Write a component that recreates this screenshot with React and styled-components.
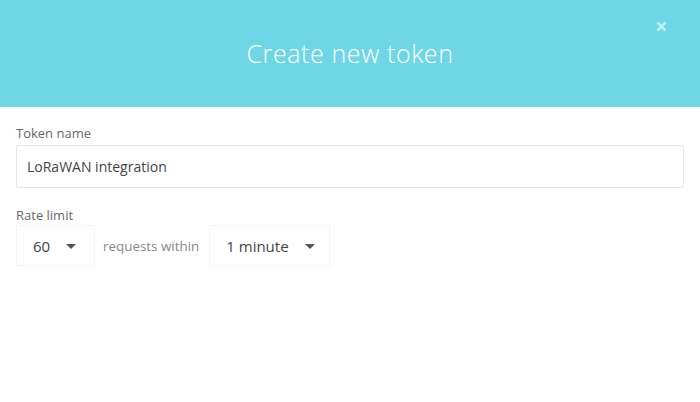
import React from 'react';
import styled, { createGlobalStyle } from 'styled-components';

const GlobalStyle = createGlobalStyle`
  html, body {
    margin: 0;
    padding: 0;
    background: #ffffff;
    font-family: 'Open Sans', 'Liberation Sans', sans-serif;
  }
`;

const Modal = styled.div`
  width: 700px;
  height: 402px;
  background: #ffffff;
  display: flex;
  flex-direction: column;
`;

const Header = styled.header`
  position: relative;
  height: 107px;
  background: #6fd6e6;
  display: flex;
  align-items: center;
  justify-content: center;
`;

const Title = styled.h1`
  margin: 0 0 2px;
  font-family: 'Open Sans', 'Liberation Sans', sans-serif;
  font-weight: 300;
  font-size: 25px;
  color: #ffffff;
  letter-spacing: 0.6px;
`;

const Close = styled.button`
  position: absolute;
  top: 19px;
  right: 32px;
  width: 14px;
  height: 14px;
  padding: 0;
  border: 0;
  background: transparent;
  cursor: pointer;
  display: flex;
  align-items: center;
  justify-content: center;
`;

const Body = styled.div`
  padding: 17px 16px 0;
  display: flex;
  flex-direction: column;
`;

const Label = styled.label`
  font-size: 13px;
  color: #6a6a6a;
  line-height: 18px;
  margin-bottom: ${(p) => p.gap}px;
`;

const TextInput = styled.input`
  box-sizing: border-box;
  width: 668px;
  height: 43px;
  padding: 0 10px;
  border: 1px solid #e8e8e8;
  border-radius: 2px;
  font-family: inherit;
  font-size: 14px;
  color: #444;
  outline: none;
  margin-bottom: 18px;
`;

const Row = styled.div`
  display: flex;
  align-items: center;
`;

const Select = styled.div`
  box-sizing: border-box;
  width: ${(p) => p.width}px;
  height: 41px;
  border: 1px solid #f3f3f3;
  display: flex;
  align-items: center;
  padding-left: ${(p) => p.pad}px;
  font-size: 15px;
  color: #444;
`;

const Value = styled.span`
  margin-right: 16px;
`;

const Caret = styled.span`
  width: 0;
  height: 0;
  border-left: 5px solid transparent;
  border-right: 5px solid transparent;
  border-top: 5px solid #555;
  margin-top: 2px;
`;

const Between = styled.span`
  font-size: 13.4px;
  color: #888;
  margin: 0 10px 0 8px;
`;

export default function App() {
  return (
    <>
      <GlobalStyle />
      <Modal>
        <Header>
          <Title>Create new token</Title>
          <Close aria-label="Close">
            <svg width="11" height="11" viewBox="0 0 11 11">
              <path d="M1.5 1.5 L9.5 9.5 M9.5 1.5 L1.5 9.5" stroke="#c4eff6" strokeWidth="2.6" strokeLinecap="butt" />
            </svg>
          </Close>
        </Header>
        <Body>
          <Label gap={3}>Token name</Label>
          <TextInput defaultValue="LoRaWAN integration" />
          <Label gap={1}>Rate limit</Label>
          <Row>
            <Select width={79} pad={16}>
              <Value>60</Value>
              <Caret />
            </Select>
            <Between>requests within</Between>
            <Select width={121} pad={16}>
              <Value>1 minute</Value>
              <Caret />
            </Select>
          </Row>
        </Body>
      </Modal>
    </>
  );
}
